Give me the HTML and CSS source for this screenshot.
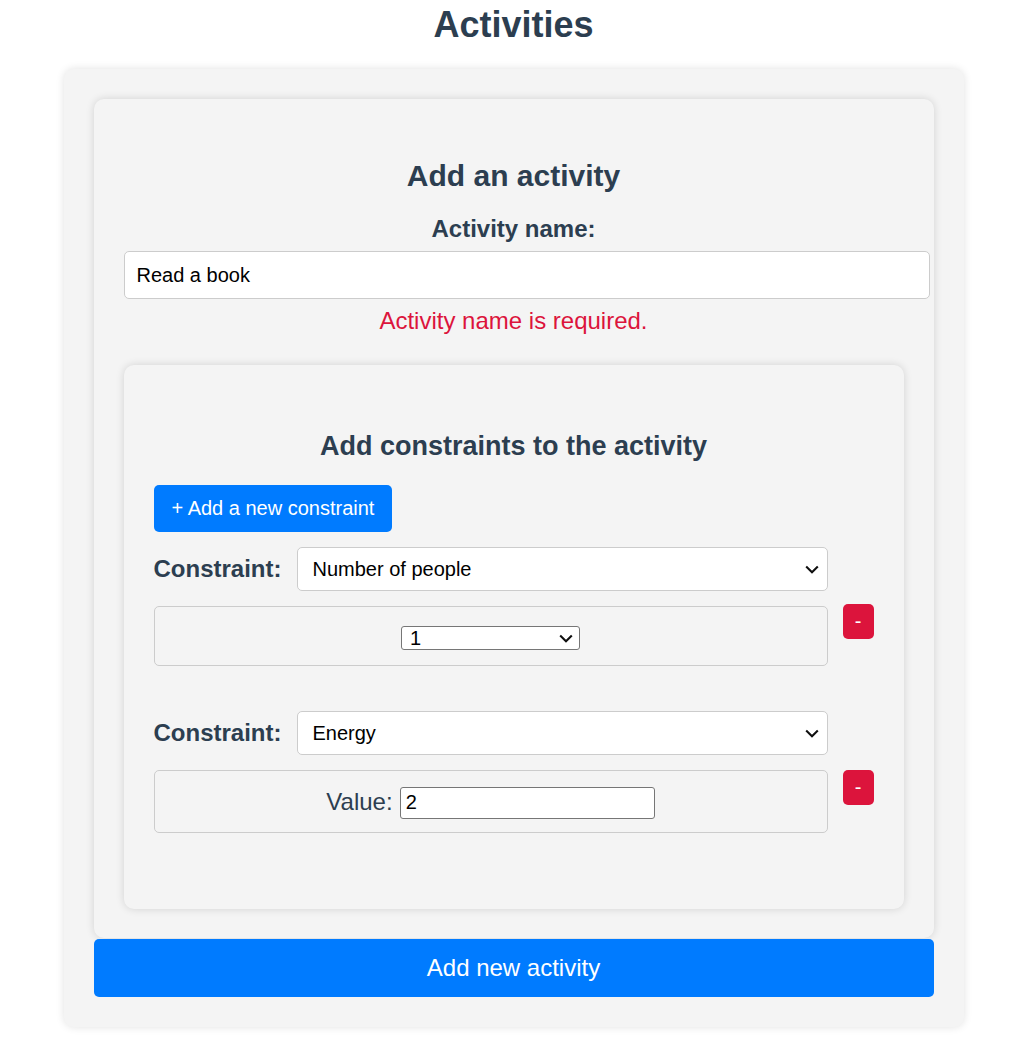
FILE: index.html
```html
<!DOCTYPE html>
<html lang="en">
<head>
<meta charset="utf-8">
<title>Activities</title>
<link rel="stylesheet" href="styles.css">
</head>
<body>
<div class="page">
  <h1 class="title">Activities</h1>
  <div class="container">
    <form class="card">
      <h2 class="card-title">Add an activity</h2>
      <label class="field-label" for="name">Activity name:</label>
      <input class="name-input" id="name" type="text" value="Read a book">
      <p class="error">Activity name is required.</p>

      <div class="constraints">
        <h3 class="constraints-title">Add constraints to the activity</h3>
        <button type="button" class="btn-add">+ Add a new constraint</button>

        <div class="constraint">
          <div class="constraint-main">
            <div class="constraint-row">
              <span class="constraint-label">Constraint:</span>
              <select class="constraint-select">
                <option>Number of people</option>
              </select>
            </div>
            <div class="param param-people">
              <select class="people-select">
                <option>1</option>
              </select>
            </div>
          </div>
          <button type="button" class="btn-remove">-</button>
        </div>

        <div class="constraint">
          <div class="constraint-main">
            <div class="constraint-row">
              <span class="constraint-label">Constraint:</span>
              <select class="constraint-select">
                <option>Energy</option>
              </select>
            </div>
            <div class="param param-value">
              <label class="value-label">Value:</label>
              <input class="value-input" type="text" value="2">
            </div>
          </div>
          <button type="button" class="btn-remove btn-remove-last">-</button>
        </div>
      </div>
    </form>
    <button type="button" class="btn-submit">Add new activity</button>
  </div>
</div>
</body>
</html>
```

FILE: styles.css
```css
* {
  font-family: "Liberation Sans", Arial, sans-serif;
}

body {
  margin: 0;
  background: #ffffff;
}

.page {
  padding: 0 0 24px 11px;
}

.title {
  margin: 4px 0 24px;
  text-align: center;
  font-size: 36px;
  line-height: 41px;
  font-weight: bold;
  color: #2c3e50;
}

.container {
  width: 840px;
  margin: 0 auto;
  padding: 30px;
  background: #f4f4f4;
  border-radius: 10px;
  box-shadow: 0 0 8px rgba(0, 0, 0, 0.12);
}

.card {
  display: flex;
  flex-direction: column;
  padding: 30px 30px 29px;
  background: #f4f4f4;
  border-radius: 10px;
  box-shadow: 0 0 8px rgba(0, 0, 0, 0.14);
  margin-bottom: 1px;
}

.card-title {
  margin: 30px 0 0;
  text-align: center;
  font-size: 30px;
  line-height: 34px;
  font-weight: bold;
  color: #2c3e50;
}

.field-label {
  margin-top: 22px;
  text-align: center;
  font-size: 24px;
  line-height: 28px;
  font-weight: bold;
  color: #2c3e50;
}

.name-input {
  margin-top: 8px;
  width: 100%;
  box-sizing: content-box;
  padding: 12px;
  height: 22px;
  font-size: 20px;
  color: #000;
  background: #fff;
  border: 1px solid #ccc;
  border-radius: 5px;
  outline: none;
}

.error {
  margin: 8px 0 0;
  text-align: center;
  font-size: 24px;
  line-height: 28px;
  color: #dc143c;
}

.constraints {
  margin-top: 30px;
  padding: 30px 30px 31px;
  background: #f4f4f4;
  border-radius: 10px;
  box-shadow: 0 0 8px rgba(0, 0, 0, 0.14);
}

.constraints-title {
  margin: 36px 0 23px;
  text-align: center;
  font-size: 27px;
  line-height: 31px;
  font-weight: bold;
  color: #2c3e50;
}

.btn-add {
  display: block;
  padding: 12px 18px;
  font-size: 20px;
  line-height: 23px;
  color: #fff;
  background: #007bff;
  border: none;
  border-radius: 5px;
}

.constraint {
  display: flex;
  align-items: flex-end;
  gap: 15px;
  margin-top: 15px;
  margin-bottom: 45px;
}

.constraint + .constraint {
  margin-top: 0;
}

.constraint-main {
  width: 674px;
  display: flex;
  flex-direction: column;
  gap: 15px;
}

.constraint-row {
  display: flex;
  align-items: center;
  gap: 15px;
}

.constraint-label {
  font-size: 24px;
  font-weight: bold;
  color: #2c3e50;
}

.constraint-select {
  flex: 1;
  height: 44px;
  padding: 0 34px 0 15px;
  font-size: 20px;
  color: #000;
  border: 1px solid #ccc;
  border-radius: 5px;
  -webkit-appearance: none;
  appearance: none;
  background: #fff url("data:image/svg+xml,%3Csvg xmlns='http://www.w3.org/2000/svg' width='14' height='9' viewBox='0 0 14 9'%3E%3Cpath d='M1.2 1.5 L7 7.2 L12.8 1.5' fill='none' stroke='%23111' stroke-width='2.1'/%3E%3C/svg%3E") no-repeat right 8px center;
}

.param {
  display: flex;
  align-items: center;
  justify-content: center;
  box-sizing: border-box;
  border: 1px solid #ccc;
  border-radius: 5px;
  background: #f4f4f4;
}

.param-people {
  height: 60px;
  padding-top: 4px;
}

.param-value {
  height: 63px;
  gap: 7px;
}

.people-select {
  width: 179px;
  height: 24px;
  padding: 0 26px 0 8px;
  font-size: 20px;
  line-height: 22px;
  color: #000;
  border: 1px solid #767676;
  border-radius: 3px;
  -webkit-appearance: none;
  appearance: none;
  background: #fff url("data:image/svg+xml,%3Csvg xmlns='http://www.w3.org/2000/svg' width='14' height='9' viewBox='0 0 14 9'%3E%3Cpath d='M1.2 1.5 L7 7.2 L12.8 1.5' fill='none' stroke='%23111' stroke-width='2.1'/%3E%3C/svg%3E") no-repeat right 6px center;
}

.value-label {
  font-size: 24px;
  color: #2c3e50;
}

.value-input {
  width: 255px;
  height: 32px;
  box-sizing: border-box;
  padding: 0 5px;
  font-size: 20px;
  color: #000;
  background: #fff;
  border: 1px solid #767676;
  border-radius: 3px;
  margin-top: 2px;
}

.btn-remove {
  margin-bottom: 27px;
  width: 31px;
  height: 35px;
  padding: 0;
  font-size: 20px;
  color: #fff;
  background: #dc143c;
  border: none;
  border-radius: 5px;
}

.btn-remove-last {
  margin-bottom: 28px;
}

.btn-submit {
  display: block;
  width: 100%;
  height: 58px;
  font-size: 24px;
  color: #fff;
  background: #007bff;
  border: none;
  border-radius: 5px;
}
```
